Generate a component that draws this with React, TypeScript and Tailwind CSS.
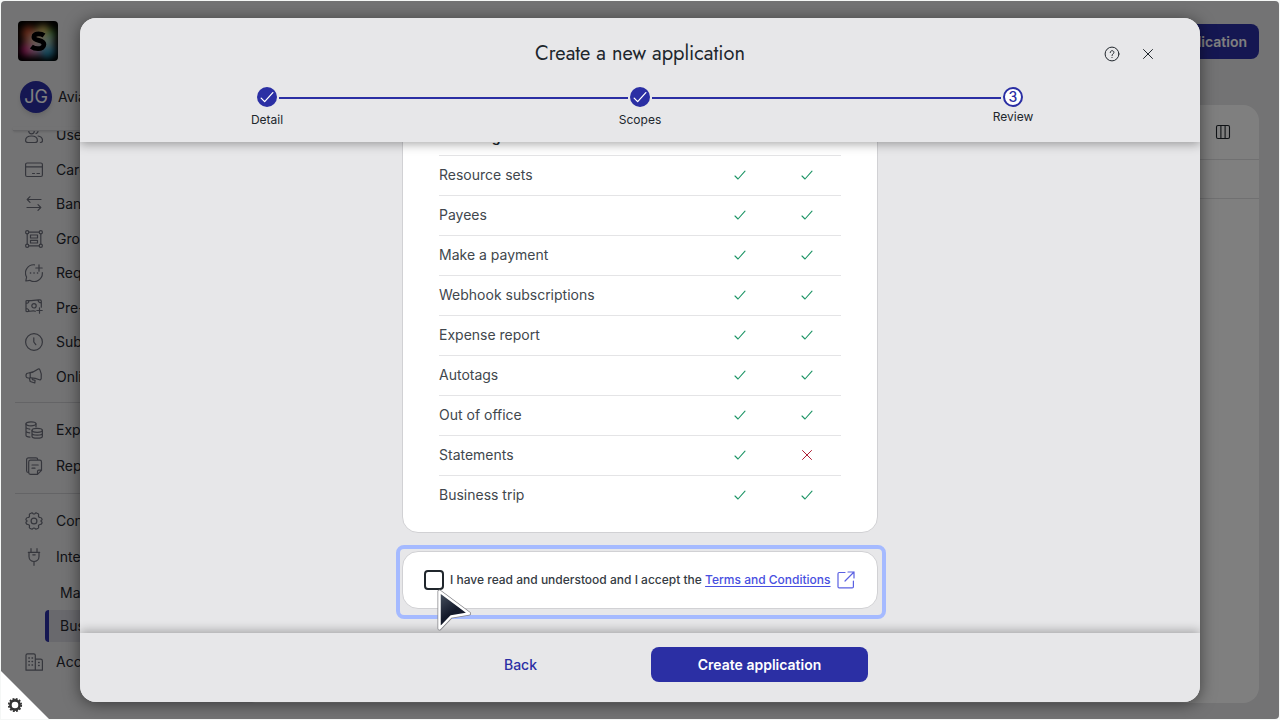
import type { ReactNode } from "react";

const scopes = [
  { name: "Resource sets", read: true, write: true },
  { name: "Payees", read: true, write: true },
  { name: "Make a payment", read: true, write: true },
  { name: "Webhook subscriptions", read: true, write: true },
  { name: "Expense report", read: true, write: true },
  { name: "Autotags", read: true, write: true },
  { name: "Out of office", read: true, write: true },
  { name: "Statements", read: true, write: false },
  { name: "Business trip", read: true, write: true },
];

function Check({ className }: { className: string }) {
  return (
    <svg viewBox="0 0 12 12" className={className} fill="none" stroke="currentColor" strokeWidth="1.1" strokeLinecap="round" strokeLinejoin="round" aria-hidden="true">
      <path d="M1 7l3 3L11 2.2" />
    </svg>
  );
}

function Cross({ className }: { className: string }) {
  return (
    <svg viewBox="0 0 12 12" className={className} fill="none" stroke="currentColor" strokeWidth="1" strokeLinecap="round" aria-hidden="true">
      <path d="M1.5 1.5l9 9M10.5 1.5l-9 9" />
    </svg>
  );
}

function Mark({ allowed }: { allowed: boolean }) {
  return allowed ? (
    <Check className="mx-auto size-3 text-[#1c9465]" />
  ) : (
    <Cross className="mx-auto size-3 text-[#b01e34]" />
  );
}

function Icon({ children }: { children: ReactNode }) {
  return (
    <svg viewBox="0 0 18 18" className="size-[18px] shrink-0" fill="none" stroke="currentColor" strokeWidth="1.2" strokeLinecap="round" strokeLinejoin="round" aria-hidden="true">
      {children}
    </svg>
  );
}

const icons = {
  users: (
    <Icon>
      <circle cx="6.5" cy="5" r="2.8" />
      <path d="M11 2.3a2.8 2.8 0 0 1 0 5.4M.6 14.5c0-3 2.4-4.500 5.900-4.500s5.900 1.500 5.900 4.500c0 1.400-1 2-2.400 2H3c-1.400 0-2.400-.6-2.400-2zM13 10c3 .4 4.500 2 4.500 4.500 0 1.300-.9 2-2.200 2" />
    </Icon>
  ),
  card: (
    <Icon>
      <rect x=".6" y="2" width="16.800" height="13.500" rx="1.500" />
      <path d="M.6 5.800h16.800M7.500 12.500h2M12 12.500h2.500" />
    </Icon>
  ),
  arrows: (
    <Icon>
      <path d="M16 4.500H2.200M5 1.700L2.200 4.500 5 7.300M2 12.500h13.800M13 9.700l2.800 2.800-2.800 2.800" />
    </Icon>
  ),
  group: (
    <Icon>
      <circle cx="2.200" cy="2.200" r="1.600" />
      <circle cx="15.800" cy="2.200" r="1.600" />
      <circle cx="2.200" cy="15.800" r="1.600" />
      <circle cx="15.800" cy="15.800" r="1.600" />
      <path d="M4 2.200h10M4 15.800h10M2.200 4v10M15.800 4v10M5.500 5h7v3h-7zM5.500 10.300h7v2.700h-7z" />
    </Icon>
  ),
  request: (
    <Icon>
      <path d="M9.500.8A8.200 8.200 0 0 0 1.600 13L.8 17l4-.7A8.200 8.200 0 0 0 17.300 8.500M14 .8v6.400M10.800 4h6.400" />
      <path d="M5.500 9h.1M9 9h.1M12.500 9h.1" strokeWidth="1.600" />
    </Icon>
  ),
  cash: (
    <Icon>
      <path d="M10.500 12.200c-3-.9-5.500.3-8.500.5-.7 0-1-.4-1-1V2.500c0-.7.4-1 1-1 4.500 1 8-1.200 13-.6.900.1 1.300.5 1.300 1.300v6M1 4.500c1.800 0 2.800-1 3-2.800M1 9.500c1.700 0 2.800 1 3 3M13 1c.2 1.800 1.400 2.800 3.300 2.800M14.500 8.800v5.400M11.800 11.500h5.400" />
      <circle cx="9" cy="6.800" r="2.200" />
    </Icon>
  ),
  clock: (
    <Icon>
      <circle cx="9" cy="9" r="8.400" />
      <path d="M8.800 4.800V9l2 2.700" />
    </Icon>
  ),
  horn: (
    <Icon>
      <path d="M3.300 5c3-.2 6.800-1.700 9.500-3.800.8-.6 1.700-.4 2.100.5 1.500 3 1.900 6 1.300 9-.2.900-1 1.300-1.800 1-3-1.300-6-1.900-9.600-1.700H3.200C1.700 10 1 9.200 1 7.500s.8-2.500 2.300-2.500zM5.200 4.900v5M4.300 10.100l.9 3.400 4.600 1.500.3-2.700-2.700-.6-.2-1.500" />
    </Icon>
  ),
  coins: (
    <Icon>
      <ellipse cx="6" cy="2.800" rx="5" ry="2" />
      <path d="M1 2.800v11.500c0 1 1.500 1.700 4 1.800M11 2.800V6M1 6.500c.8 1 2 1.500 3.800 1.600M1 10.300c.8.900 2 1.400 3.800 1.500M7 9.500v5.700c0 1.200 2.200 2 5.200 2s5.200-.8 5.200-2V9.500M7 12.300c0 1.100 2.200 1.900 5.200 1.900s5.200-.8 5.200-1.900" />
      <ellipse cx="12.200" cy="9.300" rx="5.200" ry="2" />
    </Icon>
  ),
  reports: (
    <Icon>
      <path d="M5.500 3.200h9.200c1 0 1.800.8 1.800 1.800v8.300l-4 4h-7c-1 0-1.800-.8-1.800-1.800V5c0-1 .8-1.800 1.800-1.800zM12.500 17v-2.500c0-.9.400-1.300 1.300-1.300h2.500M3.500 15.500c-1.200 0-1.900-.6-1.900-1.800V2.800C1.600 1.600 2.300.9 3.500.9H11c1 0 1.700.6 1.900 1.900M7 8h6.200M7 11.200h3" />
    </Icon>
  ),
  gear: (
    <Icon>
      <path d="M5.900 1.200c.9-.6 1.500-.5 1.900.2.500.8 1.900.8 2.400 0 .4-.7 1-.8 1.900-.2l1 .6c.6.400.7.900.5 1.500-.4 1.200.3 2.200 1.500 2.200 1 0 1.500.4 1.800 1.200.3.700.4 1.100-.4 1.600-.7.400-.7 1 0 1.400.8.500.7.900.4 1.600-.3.800-.8 1.200-1.800 1.200-1.200 0-1.900 1-1.500 2.200.2.600.1 1.100-.5 1.500l-1 .6c-.9.600-1.500.5-1.900-.2-.5-.8-1.900-.8-2.400 0-.4.700-1 .8-1.900.2l-1-.6c-.6-.4-.7-.9-.5-1.500.4-1.200-.3-2.200-1.500-2.200-1 0-1.500-.4-1.800-1.200-.3-.7-.4-1.100.4-1.600.7-.4.700-1 0-1.400-.8-.5-.7-.9-.4-1.600.3-.8.800-1.200 1.800-1.200 1.200 0 1.900-1 1.500-2.200-.2-.6-.1-1.100.5-1.500z" />
      <circle cx="9" cy="9" r="2.900" />
    </Icon>
  ),
  plug: (
    <Icon>
      <path d="M6 .7v3.500M12 .7v3.500M3.300 4.300h11.400M4 4.300v4.200c0 2.800 2.200 5 5 5s5-2.200 5-5V4.300M9 13.500v3.800M7.800 6.800h2.400" />
    </Icon>
  ),
  building: (
    <Icon>
      <path d="M1 17.200V2.300C1 1.300 1.600.8 2.500.8h6.300c1 0 1.500.5 1.500 1.500v14.900zM10.300 6.200h5.200c1.200 0 1.900.6 1.900 1.800v9.200h-7.100" />
      <path d="M3.800 5h.6M7 5h.6M3.800 8.500h.6M7 8.500h.6M3.800 12h.6M7 12h.6M13.600 9.500h.6M13.600 12.500h.6" strokeWidth="1.300" />
    </Icon>
  ),
};

function NavItem({ icon, label, className }: { icon: ReactNode; label: string; className: string }) {
  return (
    <a href="#nav" className={`flex shrink-0 items-center gap-[13px] pl-6 text-[#24262f] ${className}`}>
      <span className="text-[#6a6c78]">{icon}</span>
      <span>{label}</span>
    </a>
  );
}

function Sidebar() {
  return (
    <aside className="flex w-60 shrink-0 flex-col text-sm text-[#24262f]">
      <div className="pt-5 pl-[17px]">
        <svg viewBox="0 0 40 40" className="size-10" role="img" aria-label="S">
          <defs>
            <clipPath id="logo-clip">
              <rect width="40" height="40" rx="4" />
            </clipPath>
            <filter id="logo-blur" x="-50%" y="-50%" width="200%" height="200%">
              <feGaussianBlur stdDeviation="3.500" />
            </filter>
          </defs>
          <g clipPath="url(#logo-clip)">
            <rect width="40" height="40" fill="#000" />
            <g filter="url(#logo-blur)">
              <circle cx="11" cy="12" r="7" fill="#c9502c" />
              <circle cx="25" cy="11" r="7" fill="#d8b85c" />
              <circle cx="32" cy="13" r="5" fill="#5fae45" />
              <circle cx="10" cy="21" r="5" fill="#b8624e" />
              <circle cx="9" cy="29" r="6" fill="#d61c80" />
              <circle cx="17" cy="29" r="6" fill="#c886b8" />
              <circle cx="29" cy="29" r="8" fill="#2f96bd" />
              <circle cx="30" cy="20" r="6" fill="#9cc4b0" />
              <circle cx="19" cy="19" r="7" fill="#c9b8a4" />
            </g>
            <path d="M26 14.500c-1.500-1.100-3.400-1.600-5.400-1.600-2.600 0-4.700.9-4.700 3 0 4.600 10 2.400 10 7.400 0 2.800-2.400 4.400-5.900 4.400-2.600 0-4.800-.7-6.600-2.100" fill="none" stroke="#000" strokeWidth="4.800" />
          </g>
        </svg>
      </div>
      <div className="mt-5 flex h-8 items-center gap-1.5 pl-[19px]">
        <span className="flex size-8 items-center justify-center rounded-full bg-[#2b2fa4] text-lg text-white shadow-md">JG</span>
        <span>Aviato</span>
      </div>
      <div className="mt-3.5 ml-3 h-1 shrink-0 border-b border-[#c8c8cc] shadow-sm" />
      <nav aria-label="Main" className="flex flex-col overflow-hidden">
        <NavItem icon={icons.users} label="Users" className="-mt-3.5 h-9" />
        <NavItem icon={icons.card} label="Cards" className="h-[34px]" />
        <NavItem icon={icons.arrows} label="Bank transfers" className="h-[34px]" />
        <NavItem icon={icons.group} label="Groups" className="h-[35px]" />
        <NavItem icon={icons.request} label="Requests" className="h-[34px]" />
        <NavItem icon={icons.cash} label="Pre-approvals" className="h-[35px]" />
        <NavItem icon={icons.clock} label="Subscriptions" className="h-[34px]" />
        <NavItem icon={icons.horn} label="Online" className="h-[35px]" />
        <hr className="mt-2 ml-3.5 border-[#c8c8cc]" />
        <NavItem icon={icons.coins} label="Expenses" className="mt-[9px] h-9" />
        <NavItem icon={icons.reports} label="Reports" className="h-9" />
        <hr className="mt-[9px] ml-3.5 border-[#c8c8cc]" />
        <NavItem icon={icons.gear} label="Configuration" className="mt-[9px] h-9" />
        <NavItem icon={icons.plug} label="Integrations" className="h-9" />
        <a href="#manage" className="flex h-[35px] shrink-0 items-center pl-[59px]">Manage</a>
        <a href="#business" className="ml-11 flex h-8 shrink-0 items-center rounded-l border-l-4 border-[#2b2fa4] bg-[#d3d3da] pl-[11px]">Business API</a>
        <NavItem icon={icons.building} label="Account" className="mt-0.5 h-9" />
      </nav>
    </aside>
  );
}

function StepLine() {
  return <div className="mt-2.5 h-0.5 flex-1 bg-[#2b2fa4]" />;
}

function Step({ label, current }: { label: string; current?: boolean }) {
  return (
    <li className="flex w-6 flex-col items-center">
      {current ? (
        <span className="flex size-5 shrink-0 items-center justify-center rounded-full border-2 border-[#2b2fa4] bg-white text-sm font-medium text-[#2b2fa4]">3</span>
      ) : (
        <span className="mb-[3px] flex size-5 shrink-0 items-center justify-center rounded-full bg-[#2b2fa4] text-white">
          <Check className="size-3.5" />
        </span>
      )}
      <span className="mt-0.5 text-xs leading-4">{label}</span>
    </li>
  );
}

export default function App() {
  return (
    <div className="relative h-screen overflow-hidden bg-[#f5f7f6] p-px font-['Inter','Liberation_Sans',sans-serif] text-[#20262c]">
      <div className="relative flex h-full overflow-hidden rounded bg-[#e7e7e9]">
        <Sidebar />
        <main className="flex min-w-0 flex-1 flex-col pr-5 pb-4">
          <div className="flex h-[104px] shrink-0 items-start justify-end pt-[23px]">
            <button type="button" className="h-[35px] rounded-lg bg-[#2b2fa4] px-3 text-sm font-semibold text-white">New application</button>
          </div>
          <section className="flex-1 rounded-2xl bg-white">
            <div className="flex h-[55px] items-center justify-end border-b border-[#e0e0e3] pr-7">
              <button type="button" aria-label="Columns">
                <svg viewBox="0 0 16 16" className="size-4" fill="none" stroke="#20262c" strokeWidth="1.100" aria-hidden="true">
                  <rect x="1.500" y="1.500" width="13" height="13" rx="1.500" />
                  <path d="M5.900 1.500v13M10.100 1.500v13" />
                </svg>
              </button>
            </div>
            <div className="h-[39px] border-b border-[#e0e0e3]" />
          </section>
        </main>
      </div>

      <div className="absolute inset-px flex rounded bg-black/50 px-[79px] py-[17px]">
        <div role="dialog" aria-modal="true" aria-labelledby="dialog-title" className="flex min-w-0 flex-1 flex-col overflow-hidden rounded-2xl bg-[#e7e7e9] shadow-[0_2px_16px_rgba(0,0,0,0.5)]">
          <header className="relative z-10 h-[124px] shrink-0 bg-[#e7e7e9] shadow-[0_2px_10px_rgba(0,0,0,0.35)]">
            <div className="grid grid-cols-[1fr_auto_1fr] items-center pt-5">
              <span />
              <h1 id="dialog-title" className="font-['Jost','Lato',sans-serif] text-xl leading-8 font-normal">Create a new application</h1>
              <div className="flex items-center justify-end gap-5 pr-11">
                <button type="button" aria-label="Help">
                  <svg viewBox="0 0 16 16" className="size-4" fill="none" stroke="currentColor" strokeWidth="1" strokeLinecap="round" aria-hidden="true">
                    <circle cx="8" cy="8" r="6.900" />
                    <path d="M6.200 6.500c0-2.500 3.700-2.400 3.700-.1 0 1.500-1.900 1.500-1.900 3.100M8 11.500v.1" />
                  </svg>
                </button>
                <button type="button" aria-label="Close" className="flex size-4 items-center justify-center">
                  <Cross className="size-3" />
                </button>
              </div>
            </div>
            <ol className="mx-auto mt-[17px] flex w-[770px] max-w-full">
              <Step label="Detail" />
              <StepLine />
              <Step label="Scopes" />
              <StepLine />
              <Step label="Review" current />
            </ol>
          </header>

          <div className="flex min-h-0 flex-1 flex-col items-center justify-end overflow-hidden pb-6">
            <div className="w-[476px] shrink-0 rounded-2xl border border-[#d1d1d4] bg-white px-9 pb-[17px]">
              <table className="w-full table-fixed text-sm text-[#41474d]">
                <thead>
                  <tr className="h-10 border-b border-[#e4e4e6] text-[#20262c]">
                    <th scope="col" className="w-2/3 pt-1 text-left font-semibold">Invoicing</th>
                    <td />
                    <td />
                  </tr>
                </thead>
                <tbody>
                  {scopes.map((scope) => (
                    <tr key={scope.name} className="h-10 border-b border-[#e4e4e6] last:border-0">
                      <th scope="row" className="w-2/3 text-left font-normal">{scope.name}</th>
                      <td><Mark allowed={scope.read} /></td>
                      <td><Mark allowed={scope.write} /></td>
                    </tr>
                  ))}
                </tbody>
              </table>
            </div>
            <div className="relative mt-[18px] flex h-[58px] w-[476px] shrink-0 items-center rounded-2xl border border-[#d1d1d4] bg-white px-[21px] text-xs font-medium text-[#353b43]">
              <div className="pointer-events-none absolute -top-[7px] -right-[9px] -bottom-[11px] -left-[7px] rounded-lg border-4 border-[#a5baff]" />
              <input id="accept" type="checkbox" className="size-5 appearance-none rounded border-2 border-[#20262c] bg-white" />
              <label htmlFor="accept" className="ml-1.5">
                I have read and understood and I accept the{" "}
                <a href="#terms" className="text-[#484fe0] underline underline-offset-2">Terms and Conditions</a>
              </label>
              <svg viewBox="0 0 18 18" className="ml-1.5 size-[18px]" fill="none" stroke="#5a60e2" strokeWidth="1.200" strokeLinecap="round" strokeLinejoin="round" aria-hidden="true">
                <path d="M8 1.500H2.200c-.8 0-1.200.4-1.200 1.200v13c0 .8.400 1.200 1.200 1.200h13c.8 0 1.200-.4 1.200-1.200V10M11 1h6v6M17 1L8 10" />
              </svg>
            </div>
          </div>

          <footer className="relative z-10 flex h-[69px] shrink-0 justify-center bg-[#e7e7e9] pt-3.5 shadow-[0_-2px_10px_rgba(0,0,0,0.3)]">
            <div className="flex w-[456px] gap-[22px]">
              <button type="button" className="h-[35px] flex-1 text-sm font-medium text-[#2b2fa4]">Back</button>
              <button type="button" className="h-[35px] flex-1 rounded-lg bg-[#2b2fa4] text-sm font-semibold text-white">Create application</button>
            </div>
          </footer>
        </div>
      </div>

      <svg viewBox="0 0 34 42" className="pointer-events-none absolute top-[589px] left-[437px] z-20 h-[42px] w-[34px]" aria-hidden="true">
        <defs>
          <linearGradient id="pointer-fill" x1="0" y1="0" x2=".6" y2="1">
            <stop offset="0" stopColor="#4b5563" />
            <stop offset=".6" stopColor="#141a2b" />
          </linearGradient>
        </defs>
        <path d="M2.500 2.500v37L14 27.500l18-3z" fill="none" stroke="#85858a" strokeWidth="4" strokeLinejoin="round" />
        <path d="M2.500 2.500v37L14 27.500l18-3z" fill="url(#pointer-fill)" stroke="#fff" strokeWidth="2.500" strokeLinejoin="round" />
      </svg>

      <button type="button" aria-label="Settings" className="absolute bottom-px left-px size-12">
        <svg viewBox="0 0 48 48" className="size-12" aria-hidden="true">
          <path d="M0 0l48 48H0z" fill="#fff" />
          <circle cx="14" cy="34" r="4.600" fill="none" stroke="#333" strokeWidth="2.600" />
          <circle cx="14" cy="34" r="6.200" fill="none" stroke="#333" strokeWidth="1.800" strokeDasharray="1.900 1.346" />
        </svg>
      </button>
    </div>
  );
}
